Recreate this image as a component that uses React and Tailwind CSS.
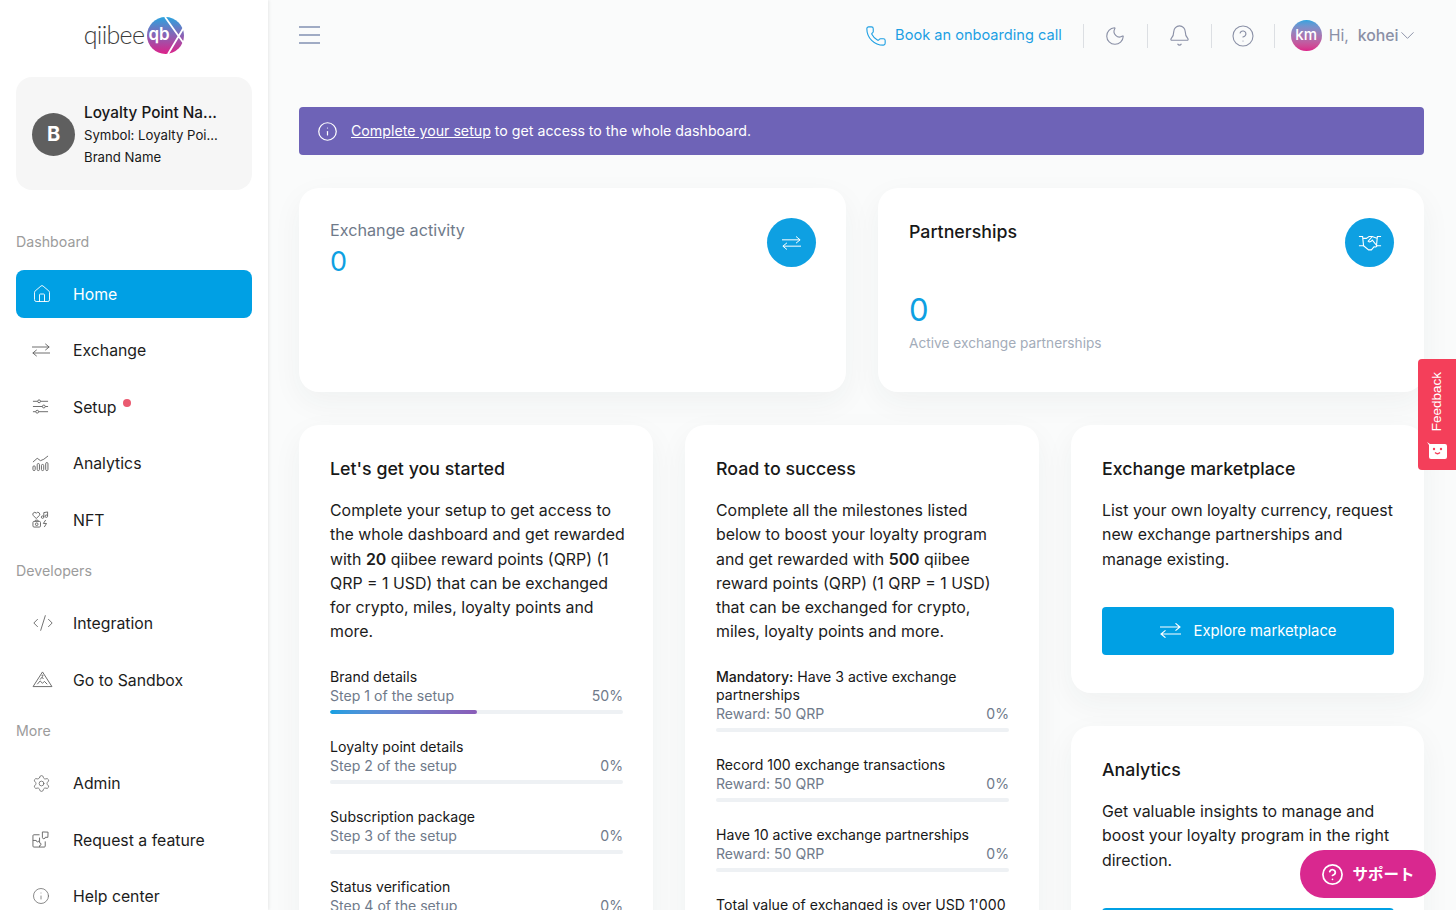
import {
  Bell,
  ChevronDown,
  CircleHelp,
  CodeXml,
  House,
  Info,
  Moon,
  Phone,
  Settings,
} from "lucide-react"

function SwapIcon(props) {
  return (
    <svg viewBox="0 0 21 15" fill="none" stroke="currentColor" strokeWidth="1.100" {...props}>
      <path d="M0 4h20M15.500 .3 20 4l-4.500 3.700M21 11H1M5.500 7.300 1 11l4.500 3.700" />
    </svg>
  )
}

function HandshakeIcon(props) {
  return (
    <svg viewBox="0 0 26 18" fill="none" stroke="currentColor" strokeWidth="1.200" {...props}>
      <path d="M1 2.500h4l1 10H1M25 2.500h-4l-1 10h5" />
      <path d="M5.500 4.500H9l3-2h3.500l5 2" />
      <path d="m15.500 2.500-4.500 5q2 2 4.500-1l5 6q-1 2-3 1l-3 3.500h-3l-5.500-4.500" />
    </svg>
  )
}

function SetupIcon(props) {
  return (
    <svg viewBox="0 0 18 18" fill="none" stroke="currentColor" strokeWidth="1" {...props}>
      <path d="M1 3.500h5M9 3.500h8M1 9h10M14 9h3M1 14.500h3M7 14.500h10" />
      <circle cx="7.500" cy="3.500" r="1.500" />
      <circle cx="12.500" cy="9" r="1.500" />
      <circle cx="5.500" cy="14.500" r="1.500" />
    </svg>
  )
}

function AnalyticsIcon(props) {
  return (
    <svg viewBox="0 0 18 18" fill="none" stroke="currentColor" strokeWidth="1" {...props}>
      <path d="M1 7.500 5.500 3.500 9 6l3.500-1.500L17 1" />
      <rect x="1" y="11.500" width="2.400" height="5" rx="1.200" />
      <rect x="5.500" y="9" width="2.400" height="7.500" rx="1.200" />
      <rect x="10" y="10" width="2.400" height="6.500" rx="1.200" />
      <rect x="14.500" y="8" width="2.400" height="8.500" rx="1.200" />
    </svg>
  )
}

function NftIcon(props) {
  return (
    <svg viewBox="0 0 18 18" fill="none" stroke="currentColor" strokeWidth="1" {...props}>
      <path d="M4.500 8 1.400 4.800a2 2 0 0 1 3-2.700l.1.200.2-.2a2 2 0 0 1 3 2.700z" />
      <path d="M12.500 6.500V1.700l4-.7v4.300" />
      <circle cx="11.200" cy="6.500" r="1.300" />
      <circle cx="15.200" cy="5.500" r="1.300" />
      <rect x="1" y="11" width="8" height="6" rx="1.200" />
      <path d="M3 11l.8-1.300h2.400L7 11" />
      <circle cx="5" cy="14" r="1.400" />
      <path d="m14.500 9.500-2.500 3.700h3.400L13 17" />
    </svg>
  )
}

function SandboxIcon(props) {
  return (
    <svg viewBox="0 0 22 18" fill="none" stroke="currentColor" strokeWidth="1" {...props}>
      <path d="M11 1 1 16.500h20z" />
      <path d="m5.500 14 3-3.500 2.500 2.500 2-2 3 3" />
      <path d="m8.500 9 2-2.500 1.500 2" />
      <circle cx="11" cy="5" r=".6" />
    </svg>
  )
}

function PuzzleIcon(props) {
  return (
    <svg viewBox="0 0 18 18" fill="none" stroke="currentColor" strokeWidth="1" {...props}>
      <path d="M8 4H2a1 1 0 0 0-1 1v11a1 1 0 0 0 1 1h11a1 1 0 0 0 1-1v-5" />
      <path d="M1 10h3.500a1.500 1.500 0 1 0 3 0H8V7M8 10v2.500a1.500 1.500 0 1 1 0 3V17" />
      <path d="m11 1 6 .2-.2 5.500H14a1.500 1.500 0 1 1-3 0z" />
    </svg>
  )
}

function SmileIcon(props) {
  return (
    <svg viewBox="0 0 20 17" {...props}>
      <path d="M0 0 3 2h15a2 2 0 0 1 2 2v11a2 2 0 0 1-2 2H4a2 2 0 0 1-2-2V3z" fill="#fff" />
      <circle cx="7" cy="7" r="1.200" fill="#f43f5a" />
      <circle cx="14" cy="7" r="1.200" fill="#f43f5a" />
      <path d="M8 10.500q2.500 2.500 5 0" stroke="#f43f5a" strokeWidth="1.300" fill="none" />
    </svg>
  )
}

function Logo() {
  return (
    <div className="flex h-[77px] items-center justify-center gap-[3px] pb-[6px]">
      <span className="mb-[2px] font-['Lato',sans-serif] text-[25px] leading-none font-light tracking-[-0.7px] text-[#3c3c3c]">qiibee</span>
      <svg viewBox="0 0 37 37" className="h-[37px] w-[37px]">
        <defs>
          <linearGradient id="qbx" x1="0" y1="0" x2="0" y2="1">
            <stop offset="0" stopColor="#2aa3df" />
            <stop offset="0.5" stopColor="#8a62b4" />
            <stop offset="1" stopColor="#dc2189" />
          </linearGradient>
        </defs>
        <circle cx="18.500" cy="18.500" r="18.500" fill="url(#qbx)" />
        <text x="1.500" y="23" fill="#fff" fontSize="17" fontWeight="600" fontFamily="Inter, sans-serif">qb</text>
        <path d="M21 37 36.500 11M18 0l18.500 26" stroke="#fff" strokeWidth="1.800" />
      </svg>
    </div>
  )
}

const navGroups = [
  {
    label: "Dashboard",
    items: [
      { name: "Home", icon: <House className="h-[20px] w-[20px]" strokeWidth={1.100} />, active: true },
      { name: "Exchange", icon: <SwapIcon className="h-[14px] w-[18px]" /> },
      { name: "Setup", icon: <SetupIcon className="h-[17px] w-[17px]" />, dot: true },
      { name: "Analytics", icon: <AnalyticsIcon className="h-[17px] w-[17px]" /> },
      { name: "NFT", icon: <NftIcon className="h-[17px] w-[17px]" /> },
    ],
  },
  {
    label: "Developers",
    items: [
      { name: "Integration", icon: <CodeXml className="h-[22px] w-[22px]" strokeWidth={1} /> },
      { name: "Go to Sandbox", icon: <SandboxIcon className="h-[17px] w-[21px]" /> },
    ],
  },
  {
    label: "More",
    items: [
      { name: "Admin", icon: <Settings className="h-[19px] w-[19px]" strokeWidth={1} /> },
      { name: "Request a feature", icon: <PuzzleIcon className="h-[17px] w-[17px]" /> },
      { name: "Help center", icon: <Info className="h-[18px] w-[18px]" strokeWidth={1} /> },
    ],
  },
]

function Sidebar() {
  return (
    <aside className="h-[910px] w-[268px] shrink-0 overflow-hidden bg-white px-4 shadow-[1px_0_3px_rgba(0,0,0,0.08)]">
      <Logo />
      <div className="flex h-[113px] items-center gap-[9px] rounded-[16px] bg-[#f6f6f6] pt-[1px] pl-4">
        <div className="flex h-[43px] w-[43px] shrink-0 items-center justify-center rounded-full bg-[#5f5f5f] text-[20px] font-bold text-white">B</div>
        <div className="text-[#181818]">
          <div className="text-[15.300px] leading-[23px] font-medium">Loyalty Point Na...</div>
          <div className="text-[13.200px] leading-[22px]">Symbol: Loyalty Poi...</div>
          <div className="text-[13.200px] leading-[22px]">Brand Name</div>
        </div>
      </div>
      <div className="mt-[32.500px]">
        {navGroups.map((group) => (
          <div key={group.label}>
            <div className="pt-[9px] pb-[18px] text-[14.200px] leading-5 text-[#9c9c9c]">{group.label}</div>
            {group.items.map((item) => (
              <div
                key={item.name}
                className={
                  item.active
                    ? "mb-2 flex h-[48.500px] items-center rounded-lg bg-[#00a0e4] text-white"
                    : "mb-2 flex h-[48.500px] items-center text-[#1c1c1c]"
                }
              >
                <span className={item.active ? "flex w-[57px] justify-start pl-4" : "flex w-[57px] justify-start pl-4 text-[#666]"}>{item.icon}</span>
                <span className="pt-[2px] text-[15.800px]">{item.name}</span>
                {item.dot && <span className="mb-2 ml-[6px] h-2 w-2 rounded-full bg-[#ea5a70]" />}
              </div>
            ))}
          </div>
        ))}
      </div>
    </aside>
  )
}

function TopBar() {
  const divider = <span className="h-[24px] w-px bg-[#dcdfe3]" />
  return (
    <div className="flex h-[70px] items-center justify-between">
      <div className="flex w-[21px] flex-col gap-[6.500px]">
        <span className="h-[1.500px] bg-[#a0abc4]" />
        <span className="h-[1.500px] bg-[#a0abc4]" />
        <span className="h-[1.500px] bg-[#a0abc4]" />
      </div>
      <div className="flex items-center pt-[1px] text-[#8a90a6]">
        <Phone className="mr-2 h-[22px] w-[22px] text-[#1c9fe3]" strokeWidth={1.200} />
        <span className="text-[14.600px] text-[#1c9fe3]">Book an onboarding call</span>
        <span className="ml-[21px] flex w-[65px] items-center justify-between">
          {divider}
          <Moon className="h-[22px] w-[22px]" strokeWidth={1.200} />
          {divider}
        </span>
        <span className="flex w-[63px] items-center justify-center">
          <Bell className="h-[23px] w-[23px]" strokeWidth={1.200} />
        </span>
        {divider}
        <span className="flex w-[62px] items-center justify-center">
          <CircleHelp className="h-[24px] w-[24px]" strokeWidth={1.100} />
        </span>
        {divider}
        <div className="mr-[5.500px] ml-4 flex items-center">
          <div className="flex h-[31px] w-[31px] items-center justify-center rounded-full bg-gradient-to-b from-[#2aa3df] to-[#dc2189] text-[15px] font-medium text-white">km</div>
          <span className="ml-[7px] text-[15.800px]">Hi,&nbsp; <span className="font-medium">kohei</span></span>
          <ChevronDown className="-ml-[3px] h-[23px] w-[23px]" strokeWidth={1} />
        </div>
      </div>
    </div>
  )
}

function CircleIcon({ children }) {
  return <div className="flex h-[49px] w-[49px] items-center justify-center rounded-full bg-[#0ea0e2] text-white">{children}</div>
}

function Card({ children, className = "" }) {
  return <div className={"rounded-[20px] bg-white py-[30px] pr-[30px] pl-[31px] shadow-[0_10px_30px_rgba(30,50,60,0.05)] " + className}>{children}</div>
}

function Progress({ name, sub, pct, fill }) {
  return (
    <div className="mb-[23.500px]">
      <div className="text-[14.100px] leading-[18px] text-[#181818]">{name}</div>
      <div className="flex justify-between text-[14.100px] leading-5 text-[#6f7a8a]">
        <span>{sub}</span>
        <span>{pct}</span>
      </div>
      <div className="mt-[4.500px] h-1 overflow-hidden rounded-full bg-[#eef1f4]">
        {fill && <div className="h-1 w-1/2 rounded-full bg-gradient-to-r from-[#0ea0e2] to-[#8a5cb8]" />}
      </div>
    </div>
  )
}

const steps = [
  { id: 1, name: "Brand details", sub: "Step 1 of the setup", pct: "50%", fill: true },
  { id: 2, name: "Loyalty point details", sub: "Step 2 of the setup", pct: "0%" },
  { id: 3, name: "Subscription package", sub: "Step 3 of the setup", pct: "0%" },
  { id: 4, name: "Status verification", sub: "Step 4 of the setup", pct: "0%" },
]

const milestones = [
  { id: 1, name: <><span className="font-medium">Mandatory:</span> Have 3 active exchange partnerships</>, sub: "Reward: 50 QRP", pct: "0%" },
  { id: 2, name: "Record 100 exchange transactions", sub: "Reward: 50 QRP", pct: "0%" },
  { id: 3, name: "Have 10 active exchange partnerships", sub: "Reward: 50 QRP", pct: "0%" },
  { id: 4, name: "Total value of exchanged is over USD 1'000", sub: "Reward: 50 QRP", pct: "0%" },
]

function Body({ children }) {
  return <p className="mt-[17px] -mr-[2px] text-[15.900px] leading-[24.300px] text-[#1c1c1c]">{children}</p>
}

function Title({ children }) {
  return <h3 className="text-[17.800px] leading-[27px] font-medium text-[#181818]">{children}</h3>
}

export default function App() {
  return (
    <div className="flex h-[910px] overflow-hidden bg-[#fafbfb] font-['Inter',sans-serif]">
      <Sidebar />
      <main className="min-w-0 flex-1 pr-8 pl-[31px]">
        <TopBar />
        <div className="mt-[37px] flex h-12 items-center gap-[13px] rounded bg-[#6e63b7] pl-[18px] text-[14.200px] text-white">
          <Info className="h-[21px] w-[21px]" strokeWidth={1.400} />
          <span><span className="underline">Complete your setup</span> to get access to the whole dashboard.</span>
        </div>

        <div className="mt-[33px] grid grid-cols-[547px_546px] gap-8">
          <Card className="flex h-[204px] justify-between">
            <div>
              <div className="text-[16.200px] leading-[24px] text-[#6f7a8a]">Exchange activity</div>
              <div className="mt-[2px] text-[27px] leading-[36px] text-[#0ea0e2]">0</div>
            </div>
            <CircleIcon><SwapIcon className="h-[14px] w-[19px]" /></CircleIcon>
          </Card>
          <Card className="flex h-[204px] justify-between">
            <div>
              <Title>Partnerships</Title>
              <div className="mt-[46px] text-[31px] leading-[38px] text-[#0ea0e2]">0</div>
              <div className="mt-[3px] text-[13.700px] leading-[22px] text-[#a3acb9]">Active exchange partnerships</div>
            </div>
            <CircleIcon><HandshakeIcon className="h-[17px] w-[24px]" /></CircleIcon>
          </Card>
        </div>

        <div className="mt-[33px] grid grid-cols-[354px_354px_353px] items-start gap-8">
          <Card className="h-[560px]">
            <Title>Let's get you started</Title>
            <Body>
              Complete your setup to get access to the whole dashboard and get rewarded with <b className="font-semibold">20</b> qiibee reward points (QRP) (1 QRP = 1 USD) that can be exchanged for crypto, miles, loyalty points and more.
            </Body>
            <div className="mt-[23px]">
              {steps.map((s) => <Progress key={s.id} {...s} />)}
            </div>
          </Card>
          <Card className="h-[560px]">
            <Title>Road to success</Title>
            <Body>
              Complete all the milestones listed below to boost your loyalty program and get rewarded with <b className="font-semibold">500</b> qiibee reward points (QRP) (1 QRP = 1 USD) that can be exchanged for crypto, miles, loyalty points and more.
            </Body>
            <div className="mt-[23px]">
              {milestones.map((m) => <Progress key={m.id} {...m} />)}
            </div>
          </Card>
          <div className="flex flex-col gap-[33px]">
            <Card className="h-[268px]">
              <Title>Exchange marketplace</Title>
              <Body>List your own loyalty currency, request new exchange partnerships and manage existing.</Body>
              <button className="mt-[35px] flex h-12 w-full items-center justify-center gap-[13px] rounded bg-[#00a0e4] text-[14.800px] text-white">
                <SwapIcon className="h-[15px] w-[21px]" />
                Explore marketplace
              </button>
            </Card>
            <Card className="h-[268px]">
              <Title>Analytics</Title>
              <Body>Get valuable insights to manage and boost your loyalty program in the right direction.</Body>
              <button className="mt-[35px] flex h-12 w-full items-center justify-center rounded bg-[#00a0e4] text-[14.800px] text-white">View analytics</button>
            </Card>
          </div>
        </div>
      </main>

      <div className="fixed top-[359px] right-0 flex h-[111px] w-[38px] flex-col items-center rounded-l bg-[#f43f5a] pt-[13px] text-white">
        <span className="rotate-180 font-['Liberation_Sans',sans-serif] text-[13.500px] leading-none [writing-mode:vertical-rl]">Feedback</span>
        <SmileIcon className="mt-[11px] h-[17px] w-[20px]" />
      </div>

      <div className="fixed top-[850px] left-[1300px] flex h-[48px] w-[136px] items-center justify-center gap-[8px] rounded-full bg-[#d9288f] text-white">
        <CircleHelp className="h-[23px] w-[23px]" strokeWidth={1.800} />
        <span className="font-['Noto_Sans_CJK_JP',sans-serif] text-[15.500px] font-bold">サポート</span>
      </div>
    </div>
  )
}
